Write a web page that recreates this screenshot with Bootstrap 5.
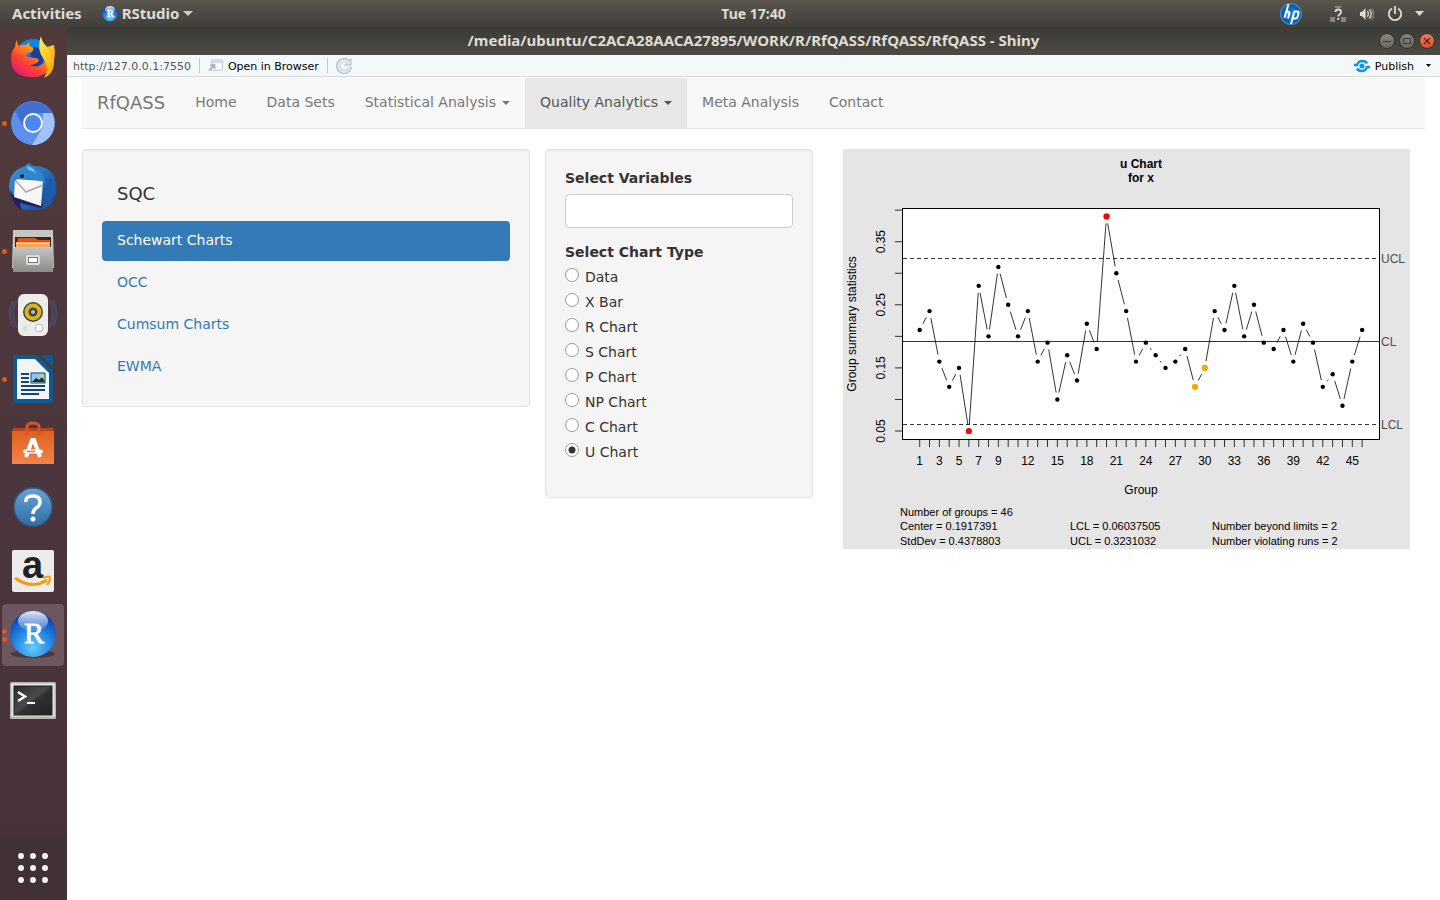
<!DOCTYPE html>
<html lang="en">
<head>
<meta charset="utf-8">
<meta name="viewport" content="width=device-width, initial-scale=1">
<title>RfQASS - Shiny</title>
<link href="https://cdn.jsdelivr.net/npm/bootstrap@5.3.0/dist/css/bootstrap.min.css" rel="stylesheet">
<style>
  body { font: 14px/20px "DejaVu Sans", sans-serif; color: #333; background: #fff; }
  a { text-decoration: none; }
  svg { display: block; flex: none; overflow: visible; }

  .shell-bar, .window-title { font: 700 15px/27px "Noto Sans", sans-serif; color: #dfdbd2; }
  .shell-bar { height: 27px; background: linear-gradient(#5a564d, #403f3a); }
  .shell-bar button { border: 0; padding: 0; background: none; color: inherit; font: inherit; }
  .shell-bar .shell-clock { margin-left: 67px; font-size: 14px; }
  .shell-side { flex: 1 1 0; }
  .window-title { height: 28px; background: linear-gradient(#3b3a35, #4e4b44); }
  .window-title button { width: 16px; height: 16px; border: 1px solid #33322e; border-radius: 50%; padding: 0; background: linear-gradient(#86847c, #6a6861); }
  .window-title .close-win { background: linear-gradient(#f47a55, #e0501f); }
  .window-buttons { padding-right: 5px; }

  .dock { width: 67px; background: linear-gradient(#523a3b, #4b363d 50%, #47323a); padding: 1px 3px 0 2px; gap: 2px; }
  .dock-item { width: 62px; height: 62px; border: 0; padding: 0; background: none; border-radius: 4px; position: relative; display: flex; align-items: center; justify-content: center; }
  .dock-item.current { background: #6b575d; }
  .dots { position: absolute; left: 0; top: 0; height: 100%; display: flex; flex-direction: column; justify-content: center; gap: 3px; }
  .dots i { width: 5px; height: 5px; border-radius: 50%; background: #e95420; }
  .dock-apps { background: #413136; margin: auto 0 0 -2px; padding-right: 2px; width: 67px; height: 64px; border-radius: 0; }

  .viewer-bar { height: 22px; background: #f4f8f9; border-bottom: 1px solid #d6dadc; font-size: 11px; line-height: 20px; padding: 0 9px 0 6px; margin-bottom: 1px; }
  .viewer-bar button { border: 0; padding: 0; background: none; color: #000; font: inherit; gap: 5px; }
  .viewer-bar .rule { width: 1px; height: 15px; background: #c6cbce; margin: 0 8px; }
  .viewer-url { color: #555; }
  .viewer-url, .viewer-label { padding-top: 2px; }

  .page-area { padding: 0 15px 20px; }
  .app-nav { background: #f8f8f8; border-bottom: 1px solid #e7e7e7; margin-bottom: 20px; padding: 0; }
  .app-nav .navbar-brand { font-size: 18px; line-height: 20px; margin: 0; padding: 15px; color: #777; }
  .app-nav .navbar-nav .nav-link { padding: 14px 15px 16px; font-size: 14px; line-height: 20px; color: #777; }
  .app-nav .navbar-nav .chosen { background: #e7e7e7; color: #555; }
  .app-nav .dropdown-toggle::after { border-width: 4px 4px 0; margin-left: 6px; vertical-align: middle; }

  .panels { display: grid; grid-template-columns: 448fr 268fr 597fr; gap: 15px; align-items: start; }
  .well { background: #f5f5f5; border: 1px solid #e3e3e3; border-radius: 4px; padding: 19px; box-shadow: inset 0 1px 1px rgba(0,0,0,.05); }
  .well h4 { font-size: 18px; line-height: 20px; font-weight: 400; margin: 0; padding: 15px 15px 17px; color: #333; }
  .well .nav { gap: 2px; --bs-nav-pills-border-radius: 4px; --bs-nav-pills-link-active-bg: #337ab7; --bs-nav-link-color: #337ab7; --bs-nav-link-padding-x: 15px; --bs-nav-link-hover-color: #23527c; }
  .well .nav-link { font-size: 14px; line-height: 20px; padding-top: 9px; padding-bottom: 11px; }
  .well .form-label, .well legend { font-size: 14px; line-height: 18px; font-weight: 700; padding: 0 0 2px; margin: 0 0 5px; }
  .well legend { margin-bottom: 4px; float: none; }
  .well .form-control { height: 34px; border-color: #ccc; border-radius: 4px; margin-bottom: 15px; font-size: 14px; }
  .chart-types { padding-bottom: 16px; }
  .chart-types .form-check { padding-left: 20px; min-height: 20px; margin: 0 0 5px; }
  .chart-types .form-check:last-child { margin-bottom: 0; }
  .chart-types .form-check-input { width: 14px; height: 14px; margin: 1px 0 0 -20px; border: 1px solid #999; background-color: #fff; }
  .chart-types .form-check-input:checked { background: radial-gradient(circle, #333 0 3px, #fff 4px); border-color: #999; }
  .plot { padding: 0 15px; }
  .plot svg { width: 100%; height: auto; font: 12px "Liberation Sans", sans-serif; background: #e5e5e5; }
  .plot .stats { font-size: 11px; }
</style>
</head>
<body class="min-vh-100 d-flex flex-column">

<header class="shell-bar d-flex">
  <div class="shell-side d-flex align-items-center">
    <button class="ms-2 ps-1">Activities</button>
    <button class="d-flex align-items-center ms-3 ps-1">
      <svg width="16" height="18" viewBox="0 0 48 52"><use href="#r-ball"/></svg>
      <span class="mx-1">RStudio</span>
      <svg width="10" height="5"><path d="M0 0h10L5 5z" fill="#cfccc4"/></svg>
    </button>
  </div>
  <button class="shell-clock">Tue 17:40</button>
  <div class="shell-side d-flex align-items-center justify-content-end">
    <svg class="me-4" width="22" height="22" viewBox="0 0 22 22"><defs><radialGradient id="hp"><stop offset="0" stop-color="#1a8fd8"/><stop offset=".8" stop-color="#0a5aa8"/><stop offset="1" stop-color="#3f9ad6"/></radialGradient></defs><circle cx="11" cy="11" r="11" fill="url(#hp)"/><path d="M8.500 1 4.500 15M5 10.500q4-3 4.500-1L8 15.500M14.500 8 11 21M14 8.500h3.500q1.500 0 1 2l-.8 3q-.5 2-2 2h-3" fill="none" stroke="#fff" stroke-width="2"/></svg>
    <svg class="ms-1" width="17" height="16" viewBox="0 0 17 16"><path d="M0 11h5v5H0zM11 11h5v5h-5zM5 0h6v2H5z" fill="#88857d"/><path d="M5.500 6q0-2.500 2.800-2.500T11 6q0 1.500-1.500 2.500-1.200.8-1.200 2M8.300 12v2" fill="none" stroke="#dfdbd2" stroke-width="2"/></svg>
    <svg class="ms-2 me-2 ps-1" width="20" height="14" viewBox="0 0 17 14"><path d="M1 5h2l4-4v12L3 9H1z" fill="#dfdbd2"/><path d="M9 4q2 3 0 6M11 2q4 5 0 10" fill="none" stroke="#dfdbd2" stroke-width="1.400"/><path d="M13.500 1q4 6 0 12" fill="none" stroke="#88857d" stroke-width="1.400"/></svg>
    <svg class="ms-1 me-2" width="16" height="16" viewBox="0 0 16 16"><path d="M5 2.500a6.200 6.200 0 1 0 6 0M8 0v8" fill="none" stroke="#dfdbd2" stroke-width="1.800"/></svg>
    <svg class="ms-1 me-3" width="9" height="5"><path d="M0 0h9L4.500 5z" fill="#dfdbd2"/></svg>
  </div>
</header>

<div class="d-flex flex-grow-1">
  <nav class="dock d-flex flex-column flex-shrink-0" aria-label="Launcher">
    <button class="dock-item" aria-label="Firefox">
      <svg width="46" height="48" viewBox="0 0 46 48"><defs><linearGradient id="ff" x1="1" y1="0" x2=".2" y2="1"><stop offset="0" stop-color="#ffdf2e"/><stop offset=".4" stop-color="#ff9a0e"/><stop offset=".7" stop-color="#ff4134"/><stop offset="1" stop-color="#e3177d"/></linearGradient><linearGradient id="fy" x1="0" y1="0" x2=".6" y2="1"><stop offset="0" stop-color="#fff44f"/><stop offset="1" stop-color="#ffa90a"/></linearGradient></defs><circle cx="23" cy="22" r="18" fill="#0a84e8"/><path d="M24 12a10 10 0 0 1 6 18q-6 5-14 0z" fill="#1b3f9c"/><path d="M7 5q0 4 2 6 4-2 7-1l3-3q0 3 1 4l3 2q1 3-2 4-5 1-5 4 1 2 4 1l4 1q5 0 5 3-4 4-9 4 8 4 14-2 5-6 3-16l7-2q3 14-4 24-9 10-20 8Q5 41 2 31-1 18 5 12q0-4 2-7z" fill="url(#ff)"/><path d="M31 1q1 7 7 12 7 7 6 16-1 10-10 14 6-10 0-18-8-11-3-24z" fill="url(#fy)"/></svg>
    </button>
    <button class="dock-item" aria-label="Chromium"><span class="dots"><i></i></span>
      <svg width="44" height="44" viewBox="0 0 44 44"><circle cx="22" cy="22" r="22" fill="#5b91ee"/><path d="M4 10a22 22 0 0 1 37 2H22l-9 15z" fill="#3f70cf"/><path d="M41 12A22 22 0 0 1 21 44L32 26l0-14z" fill="#a3c2f8"/><circle cx="22" cy="22" r="10" fill="#fff"/><circle cx="22" cy="22" r="8" fill="#4a87ef"/></svg>
    </button>
    <button class="dock-item" aria-label="Thunderbird">
      <svg width="48" height="48" viewBox="0 0 48 48"><defs><linearGradient id="tb" x1="0" y1="0" x2="1" y2="1"><stop offset="0" stop-color="#3f9bdb"/><stop offset=".6" stop-color="#1f66b5"/><stop offset="1" stop-color="#143b86"/></linearGradient></defs><path d="M0 24Q0 8 16 3q4-4 5-2l3 2q18 0 22 13 3 10 0 18-4 10-16 13l-14 0Q2 42 0 24z" fill="url(#tb)"/><path d="M1 27q1 13 11 20l-1-7 21 5 2-4-30-9z" fill="#271f5c"/><path d="M6 16 34 18l-2 25L5 34z" fill="#f7f7f7"/><path d="m6 17 11 12 17-7" fill="none" stroke="#aaa" stroke-width="1.500"/><path d="M5 18Q7 5 21 4q13 1 15 16-5-3-8-3-6 0-8-3-3 3-8 0z" fill="#2f86cd"/><path d="M18 3q7 1 9 8-4-4-8-4z" fill="#7cc0ee"/><circle cx="13" cy="13" r="2" fill="#222"/><path d="M36 16q4 6 1 12l-4 18q8-2 11-8l-1-3 4-4-1-5 2-6-5 2 1-6z" fill="#1c5ba6"/></svg>
    </button>
    <button class="dock-item" aria-label="Files"><span class="dots"><i></i></span>
      <svg width="42" height="44" viewBox="0 0 42 44"><defs><linearGradient id="cab" x2="0" y2="1"><stop offset="0" stop-color="#c4c4c2"/><stop offset="1" stop-color="#8b8b89"/></linearGradient></defs><path d="M1 1h40l1 38H0z" fill="#c6c6c4"/><path d="M3 8h36v12H3z" fill="#3d2418"/><path d="M6 9h17l3 2h12v8H4z" fill="#d8541c"/><path d="M4 13h34v5H4z" fill="#f6a35b"/><path d="M5 14h32v1H5z" fill="#fff0d8"/><path d="M1 18h40v25H1z" fill="url(#cab)"/><rect x="14" y="26" width="14" height="10" rx="2" fill="#ddd"/><rect x="16.500" y="28.500" width="9" height="5" fill="#fff" stroke="#777"/></svg>
    </button>
    <button class="dock-item" aria-label="Rhythmbox">
      <svg width="48" height="44" viewBox="0 0 48 44"><path d="M8 7Q0 20 8 35M4 8Q-3 20 4 34M40 7q8 13 0 28M44 8q7 12 0 26" fill="none" stroke="#4c4a6c" stroke-width="2"/><rect x="9" y="1" width="30" height="42" rx="6" fill="#ecece8"/><circle cx="24" cy="19" r="10" fill="#444"/><circle cx="24" cy="19" r="8.500" fill="#d8b713"/><circle cx="24" cy="19" r="4.500" fill="#444"/><circle cx="24" cy="19" r="2" fill="#bbb"/><circle cx="30" cy="35" r="4" fill="#fff" stroke="#bbb"/><rect x="14" y="33" width="4" height="5" fill="#ddd"/></svg>
    </button>
    <button class="dock-item" aria-label="LibreOffice Writer"><span class="dots"><i></i></span>
      <svg width="40" height="48" viewBox="0 0 40 48"><path d="M2 0h22l16 16v30q0 2-2 2H2q-2 0-2-2V2q0-2 2-2z" fill="#0a5a94"/><path d="M28 0h10q2 0 2 2v10z" fill="#0a5a94"/><path d="M4 4h18l14 14v26H4z" fill="#f4f4f4"/><path d="M8 19h8M8 23h8M8 27h8M8 31h24M8 35h24M8 39h18" stroke="#0d4a78" stroke-width="2"/><path d="M18 18h14v10H18z" fill="#8fc6ee" stroke="#0d4a78"/><path d="m19 27 4-4 3 2 3-3 3 5z" fill="#2b2b1e"/><circle cx="29" cy="21" r="1.500" fill="#f3d14a"/></svg>
    </button>
    <button class="dock-item" aria-label="Ubuntu Software">
      <svg width="42" height="44" viewBox="0 0 42 44"><defs><linearGradient id="bag" x2="0" y2="1"><stop offset="0" stop-color="#e1601f"/><stop offset="1" stop-color="#f3834a"/></linearGradient></defs><path d="M1 7h40l1 6H0z" fill="#b8441a"/><path d="M0 10h42v33H0z" fill="url(#bag)"/><path d="M15 14V6q0-4 6-4t6 4v8" fill="none" stroke="#d3532a" stroke-width="3"/><path d="m14 36 6-17h2l6 17" fill="none" stroke="#fff" stroke-width="4"/><path d="M13 30.500h16" stroke="#fff" stroke-width="4" stroke-linecap="round"/><path d="M15 30.500h8" stroke="#ee7036" stroke-width="1.500"/></svg>
    </button>
    <button class="dock-item" aria-label="Help">
      <svg width="40" height="40" viewBox="0 0 40 40"><defs><linearGradient id="hl" x2="0" y2="1"><stop offset="0" stop-color="#6ba2d2"/><stop offset="1" stop-color="#2f6ea8"/></linearGradient></defs><circle cx="20" cy="20" r="19" fill="url(#hl)" stroke="#2c5f91" stroke-width="1.500"/><path d="M13 15q-1-6 7-6 7 0 7 6 0 4-4 6-3 2-3 6" fill="none" stroke="#fff" stroke-width="3.500"/><circle cx="20" cy="32" r="2.500" fill="#fff"/></svg>
    </button>
    <button class="dock-item" aria-label="Amazon">
      <svg width="42" height="42" viewBox="0 0 42 42"><rect width="42" height="42" rx="2" fill="#ececec"/><text x="20.500" y="28" text-anchor="middle" fill="#222" font-family="Liberation Sans, sans-serif" font-weight="700" font-size="38">a</text><path d="M3 28q17 12 32 2" fill="none" stroke="#f90" stroke-width="3"/><path d="M31 28q7-3 7 0 0 4-3 7" fill="none" stroke="#f90" stroke-width="2"/></svg>
    </button>
    <button class="dock-item current" aria-label="RStudio"><span class="dots"><i></i><i></i></span>
      <svg width="48" height="52" viewBox="0 0 48 52"><defs><radialGradient id="rb" cx=".5" cy=".8" r=".75"><stop offset="0" stop-color="#66ccfa"/><stop offset=".5" stop-color="#268be6"/><stop offset="1" stop-color="#0a40b4"/></radialGradient><linearGradient id="rs" x2="0" y2="1"><stop offset="0" stop-color="#fff" stop-opacity=".9"/><stop offset="1" stop-color="#fff" stop-opacity=".1"/></linearGradient></defs><ellipse cx="24" cy="45" rx="22" ry="4" fill="#4a3a41"/><g id="r-ball"><circle cx="24" cy="25" r="23" fill="url(#rb)"/><ellipse cx="24" cy="12" rx="15" ry="10" fill="url(#rs)"/><text x="25" y="34" text-anchor="middle" fill="#fff" stroke="#fff" stroke-width=".8" font-family="Liberation Serif, serif" font-size="30">R</text></g></svg>
    </button>
    <button class="dock-item" aria-label="Terminal">
      <svg class="mt-1" width="46" height="38" viewBox="0 0 46 38"><defs><linearGradient id="tm" x2="1" y2="1"><stop offset="0" stop-color="#2a2a2a"/><stop offset=".45" stop-color="#4a4a4a"/><stop offset=".55" stop-color="#303030"/><stop offset="1" stop-color="#222"/></linearGradient></defs><rect width="46" height="37" rx="1.500" fill="#b5b5b3"/><rect x="1.500" y="1.500" width="43" height="33" fill="#e6e6e4"/><rect x="4" y="4" width="38" height="29" fill="url(#tm)" stroke="#222"/><path d="m8 10 7 4.500-7 4.500" fill="none" stroke="#fff" stroke-width="2.500"/><path d="M17 21h8" stroke="#fff" stroke-width="2"/></svg>
    </button>
    <button class="dock-item dock-apps" aria-label="Show applications">
      <svg width="30" height="30" viewBox="0 0 30 30" fill="#f2f1f0"><circle cx="3" cy="3" r="3"/><circle cx="15" cy="3" r="3"/><circle cx="27" cy="3" r="3"/><circle cx="3" cy="15" r="3"/><circle cx="15" cy="15" r="3"/><circle cx="27" cy="15" r="3"/><circle cx="3" cy="27" r="3"/><circle cx="15" cy="27" r="3"/><circle cx="27" cy="27" r="3"/></svg>
    </button>
  </nav>

  <div class="flex-grow-1">
    <div class="window-title position-relative text-center">
      /media/ubuntu/C2ACA28AACA27895/WORK/R/RfQASS/RfQASS/RfQASS - Shiny
      <div class="window-buttons position-absolute top-0 end-0 h-100 d-flex align-items-center gap-1">
        <button aria-label="Minimize"><svg width="14" height="14"><path d="M3 7.500h8" stroke="#3b3a35"/></svg></button>
        <button aria-label="Maximize"><svg width="14" height="14"><path d="M3.500 4.500h7v5h-7z" fill="none" stroke="#3b3a35"/></svg></button>
        <button class="close-win" aria-label="Close"><svg width="14" height="14"><path d="m4 4 6 6M10 4l-6 6" stroke="#3b2a22" stroke-width="1.200"/></svg></button>
      </div>
    </div>

    <div class="viewer-bar d-flex align-items-center">
      <span class="viewer-url">http://127.0.0.1:7550</span>
      <span class="rule ms-2"></span>
      <button class="d-flex align-items-center">
        <svg width="15" height="13" viewBox="0 0 16 13"><rect x="3.500" y=".5" width="12" height="11" rx="1" fill="#fff" stroke="#b4c8d6"/><path d="M4 1h11v3H4z" fill="#c5e0f3"/><path d="M1 12 6 7M2.500 6H7v4.500" fill="none" stroke="#a0b0bc" stroke-width="1.800"/></svg>
        <span class="viewer-label">Open in Browser</span>
      </button>
      <span class="rule"></span>
      <button aria-label="Reload"><svg width="16" height="16" viewBox="0 0 16 16"><path d="M13 4.500A6 6 0 1 0 14 9" fill="none" stroke="#a9bdcd" stroke-width="4"/><path d="M15.500 0v7.500H8z" fill="#a9bdcd"/><path d="M12.500 4.500A5.700 5.700 0 1 0 13.700 9" fill="none" stroke="#e6eef6" stroke-width="2.200"/><path d="M14.500 2.200v4.300h-4.300z" fill="#e6eef6"/></svg></button>
      <button class="d-flex align-items-center ms-auto">
        <svg width="16" height="12" viewBox="0 0 16 12"><path d="M0 5h3Q4.500 1 8 1q4 0 5 2.500M16 7h-3Q11.500 11 8 11 4 11 3 8.500" fill="none" stroke="#0a97e8" stroke-width="2.400"/><circle cx="8" cy="6" r="2.500" fill="#0a97e8"/></svg>
        <span class="viewer-label">Publish</span>
      </button>
      <button class="ms-2 ps-1" aria-label="Publish options"><svg width="5" height="3"><path d="M0 0h5L2.500 3z"/></svg></button>
    </div>

    <main class="page-area">
      <nav class="navbar navbar-expand app-nav">
        <a class="navbar-brand" href="#">RfQASS</a>
        <ul class="navbar-nav">
          <li class="nav-item"><a class="nav-link" href="#">Home</a></li>
          <li class="nav-item"><a class="nav-link" href="#">Data Sets</a></li>
          <li class="nav-item"><a class="nav-link dropdown-toggle" href="#">Statistical Analysis</a></li>
          <li class="nav-item"><a class="nav-link dropdown-toggle chosen" href="#">Quality Analytics</a></li>
          <li class="nav-item"><a class="nav-link" href="#">Meta Analysis</a></li>
          <li class="nav-item"><a class="nav-link" href="#">Contact</a></li>
        </ul>
      </nav>

      <div class="panels">
        <section class="well">
          <h4>SQC</h4>
          <ul class="nav nav-pills flex-column">
            <li class="nav-item"><a class="nav-link active" href="#">Schewart Charts</a></li>
            <li class="nav-item"><a class="nav-link" href="#">OCC</a></li>
            <li class="nav-item"><a class="nav-link" href="#">Cumsum Charts</a></li>
            <li class="nav-item"><a class="nav-link" href="#">EWMA</a></li>
          </ul>
        </section>

        <form class="well">
          <label class="form-label d-block" for="vars">Select Variables</label>
          <input class="form-control" id="vars" type="text">
          <fieldset class="chart-types">
            <legend>Select Chart Type</legend>
            <div class="form-check"><input class="form-check-input" type="radio" name="ct" id="c1"><label for="c1">Data</label></div>
            <div class="form-check"><input class="form-check-input" type="radio" name="ct" id="c2"><label for="c2">X Bar</label></div>
            <div class="form-check"><input class="form-check-input" type="radio" name="ct" id="c3"><label for="c3">R Chart</label></div>
            <div class="form-check"><input class="form-check-input" type="radio" name="ct" id="c4"><label for="c4">S Chart</label></div>
            <div class="form-check"><input class="form-check-input" type="radio" name="ct" id="c5"><label for="c5">P Chart</label></div>
            <div class="form-check"><input class="form-check-input" type="radio" name="ct" id="c6"><label for="c6">NP Chart</label></div>
            <div class="form-check"><input class="form-check-input" type="radio" name="ct" id="c7"><label for="c7">C Chart</label></div>
            <div class="form-check"><input class="form-check-input" type="radio" name="ct" id="c8" checked><label for="c8">U Chart</label></div>
          </fieldset>
        </form>

        <div class="plot">
          <svg viewBox="0 0 567 400" role="img" aria-label="u Chart for x">
            <g text-anchor="middle" font-weight="700"><text x="298" y="19">u Chart</text><text x="298" y="33">for x</text></g>
            <rect x="59.500" y="59.500" width="477" height="231" fill="#fff" stroke="#000"/>
            <g id="plot-marks"></g>
            <g fill="#4d4d4d"><text x="538" y="114">UCL</text><text x="538" y="197">CL</text><text x="538" y="280">LCL</text></g>
            <text x="298" y="345" text-anchor="middle">Group</text>
            <text transform="translate(13 175) rotate(-90)" text-anchor="middle">Group summary statistics</text>
            <g class="stats">
              <text x="57" y="367">Number of groups = 46</text>
              <text x="57" y="381">Center = 0.1917391</text><text x="57" y="396">StdDev = 0.4378803</text>
              <text x="227" y="381">LCL = 0.06037505</text><text x="227" y="396">UCL = 0.3231032</text>
              <text x="369" y="381">Number beyond limits = 2</text><text x="369" y="396">Number violating runs = 2</text>
            </g>
          </svg>
        </div>
      </div>
    </main>
  </div>
</div>

<script src="https://cdn.jsdelivr.net/npm/bootstrap@5.3.0/dist/js/bootstrap.bundle.min.js"></script>
<script>
  // Group statistics in hundredths, one value per group.
  const u = [21,24,16,12,15,5,28,20,31,25,20,24,16,19,10,17,13,22,18,39,30,24,16,19,17,15,16,18,12,15,24,21,28,20,25,19,18,21,16,22,19,12,14,9,16,21];
  const X = i => 76.7 + (i - 1) * 9.832;
  const Y = v => 282 - (v - 5) * 6.31;
  const line = (a, b, c, d, extra = '') => `<path d="M${a} ${b}L${c} ${d}" stroke="#000" stroke-width=".8" ${extra}/>`;
  let out = '';
  out += line(60, 192.5, 537, 192.5);
  out += line(60, 109.5, 537, 109.5, 'stroke-dasharray="4 3"') + line(60, 275.5, 537, 275.5, 'stroke-dasharray="4 3"');
  // Connecting lines stop short of each point.
  for (let i = 1; i < u.length; i++) {
    const x1 = X(i), y1 = Y(u[i - 1]), x2 = X(i + 1), y2 = Y(u[i]);
    const len = Math.hypot(x2 - x1, y2 - y1), k = 7 / len;
    if (k < .5) out += line(x1 + (x2 - x1) * k, y1 + (y2 - y1) * k, x2 - (x2 - x1) * k, y2 - (y2 - y1) * k);
  }
  const colour = {6: 'red', 20: 'red', 29: 'orange', 30: 'orange'};
  u.forEach((v, n) => {
    const i = n + 1;
    out += `<circle cx="${X(i)}" cy="${Y(v)}" r="${colour[i] ? 3.1 : 2.2}" fill="${colour[i] || '#000'}"/>`;
    out += line(X(i), 291, X(i), 298);
  });
  for (let v = 5; v <= 40; v += 5) {
    out += line(52, Y(v), 59, Y(v));
    if (v % 10) out += `<text transform="translate(42 ${Y(v)}) rotate(-90)" text-anchor="middle">${(v / 100).toFixed(2)}</text>`;
  }
  [1,3,5,7,9,12,15,18,21,24,27,30,33,36,39,42,45].forEach(i => out += `<text x="${X(i)}" y="316" text-anchor="middle">${i}</text>`);
  document.getElementById('plot-marks').innerHTML = out;
</script>
</body>
</html>
